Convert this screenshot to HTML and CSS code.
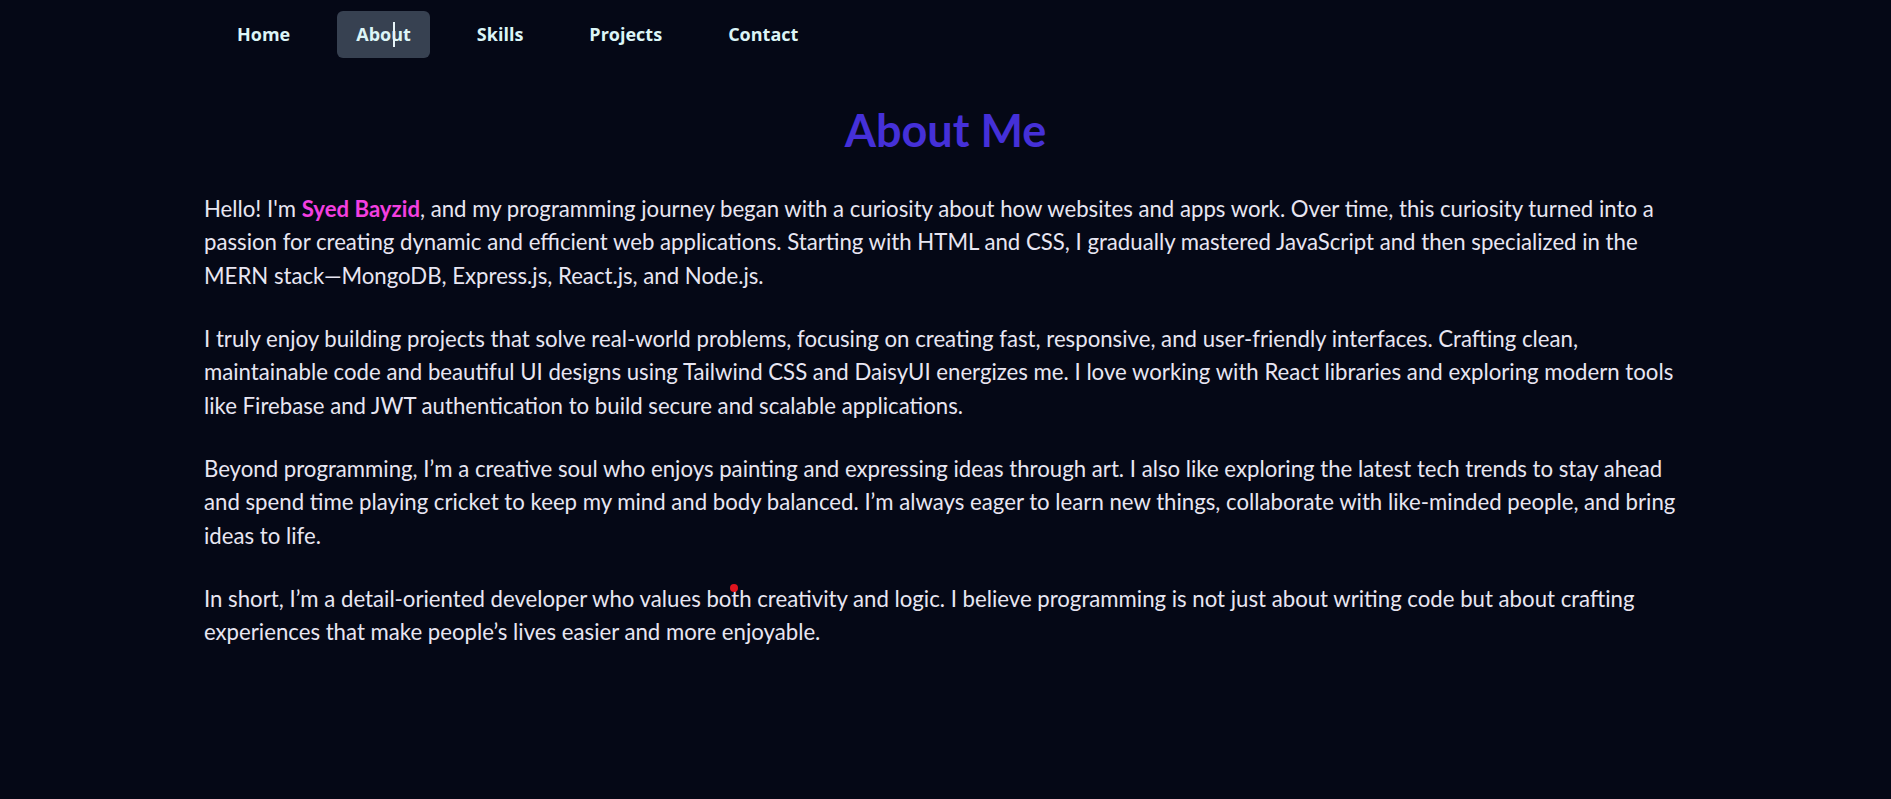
FILE: index.html
```html
<!DOCTYPE html>
<html lang="en">
<head>
<meta charset="utf-8">
<title>About Me</title>
<link rel="stylesheet" href="styles.css">
</head>
<body>
<nav class="nav">
  <a class="nav-item" href="#home">Home</a>
  <a class="nav-item active" href="#about">About</a>
  <a class="nav-item" href="#skills">Skills</a>
  <a class="nav-item" href="#projects">Projects</a>
  <a class="nav-item" href="#contact">Contact</a>
</nav>
<main class="about">
  <h1 class="title">About Me</h1>
  <div class="body">
    <p>Hello! I'm <span class="name">Syed Bayzid</span>, and my programming journey began with a curiosity about how websites and apps work. Over time, this curiosity turned into a passion for creating dynamic and efficient web applications. Starting with HTML and CSS, I gradually mastered JavaScript and then specialized in the MERN stack—MongoDB, Express.js, React.js, and Node.js.</p>
    <p>I truly enjoy building projects that solve real-world problems, focusing on creating fast, responsive, and user-friendly interfaces. Crafting clean, maintainable code and beautiful UI designs using Tailwind CSS and DaisyUI energizes me. I love working with React libraries and exploring modern tools like Firebase and JWT authentication to build secure and scalable applications.</p>
    <p>Beyond programming, I’m a creative soul who enjoys painting and expressing ideas through art. I also like exploring the latest tech trends to stay ahead and spend time playing cricket to keep my mind and body balanced. I’m always eager to learn new things, collaborate with like-minded people, and bring ideas to life.</p>
    <p>In short, I’m a detail-oriented developer who values both creativity and logic. I believe programming is not just about writing code but about crafting experiences that make people’s lives easier and more enjoyable.</p>
  </div>
</main>
<div class="ibeam"></div>
<div class="cursor-dot"></div>
</body>
</html>
```
FILE: styles.css
```css
* { box-sizing: border-box; }
html, body { margin: 0; padding: 0; }
body {
  background: #050816;
  color: #e8e6f2;
  font-family: Lato, "Open Sans", sans-serif;
  min-height: 799px;
  position: relative;
}
.nav {
  display: flex;
  gap: 28px;
  padding: 11px 0 0 218px;
}
.nav-item {
  display: block;
  height: 47px;
  line-height: 47px;
  padding: 0 19px;
  border-radius: 6px;
  color: #dcf5f7;
  font-family: "Open Sans", Lato, sans-serif;
  font-weight: 700;
  font-size: 18px;
  text-decoration: none;
}
.nav-item.active { background: #374151; }
.ibeam {
  position: absolute;
  left: 393px;
  top: 22px;
  width: 2px;
  height: 25px;
  background: #e8f4f8;
}
.about {
  max-width: 1483px;
  margin: 0 auto;
  padding-top: 45px;
}
.title {
  margin: 0;
  text-align: center;
  font-size: 45px;
  line-height: 1.2;
  font-weight: 700;
  color: #4530d8;
}
.body { padding-top: 35px; }
.body p {
  margin: 0 0 30px;
  font-size: 22.2px;
  line-height: 33.33px;
}
.name { color: #f43fe0; font-weight: 700; }
.cursor-dot {
  position: absolute;
  left: 730px;
  top: 584px;
  width: 8px;
  height: 8px;
  border-radius: 50%;
  background: #e0141e;
}
```
